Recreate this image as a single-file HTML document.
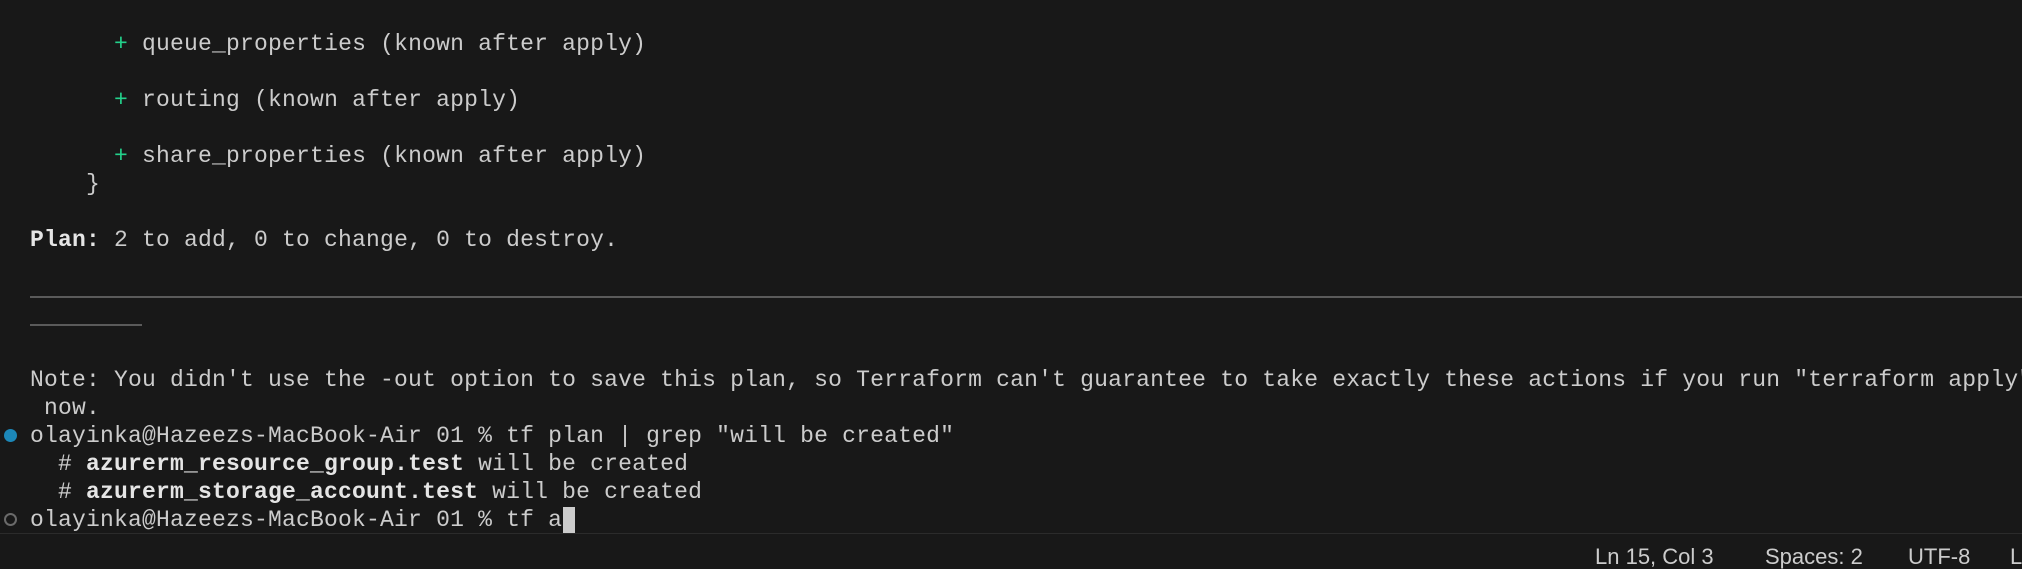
<!DOCTYPE html>
<html><head><meta charset="utf-8"><style>
html,body{margin:0;padding:0;background:#181818;width:2022px;height:558px;overflow:hidden;}
.t{position:absolute;left:0;top:0;width:2022px;height:533px;}
.r{position:absolute;left:30px;height:28px;line-height:28px;white-space:pre;font-family:"Liberation Mono",monospace;font-size:23px;letter-spacing:0.2px;color:#cccccc;}
.g{color:#23d18b}
b{font-weight:bold;color:#e5e5e5}
.sep{position:absolute;left:30px;height:2px;background:#5a5a5a;}
.dot{position:absolute;left:4px;width:13px;height:13px;border-radius:50%;box-sizing:border-box;}
.cur{position:absolute;left:563px;top:507px;width:12px;height:26px;background:#cccccc;}
.sb{position:absolute;left:0;top:533px;width:2022px;height:25px;border-top:1px solid #2b2b2b;background:#181818;}
.sbt{position:absolute;top:11px;font-family:"Liberation Sans",sans-serif;font-size:22px;color:#cccccc;white-space:pre;line-height:24px;}
</style></head><body>
<div class="t">
<div class="r" style="top:-26px">        <span class="g">+</span> static_website (known after apply)</div>
<div class="r" style="top:30px">      <span class="g">+</span> queue_properties (known after apply)</div>
<div class="r" style="top:86px">      <span class="g">+</span> routing (known after apply)</div>
<div class="r" style="top:142px">      <span class="g">+</span> share_properties (known after apply)</div>
<div class="r" style="top:170px">    }</div>
<div class="r" style="top:226px"><b>Plan:</b> 2 to add, 0 to change, 0 to destroy.</div>
<div class="sep" style="top:296px;width:1992px"></div>
<div class="sep" style="top:324px;width:112px"></div>
<div class="r" style="top:366px">Note: You didn't use the -out option to save this plan, so Terraform can't guarantee to take exactly these actions if you run "terraform apply"</div>
<div class="r" style="top:394px"> now.</div>
<div class="dot" style="top:429px;background:#1c87b8"></div>
<div class="r" style="top:422px">olayinka@Hazeezs-MacBook-Air 01 % tf plan | grep "will be created"</div>
<div class="r" style="top:450px">  # <b>azurerm_resource_group.test</b> will be created</div>
<div class="r" style="top:478px">  # <b>azurerm_storage_account.test</b> will be created</div>
<div class="dot" style="top:513px;border:2px solid #6a6a6a"></div>
<div class="r" style="top:506px">olayinka@Hazeezs-MacBook-Air 01 % tf a</div>
<div class="cur"></div>
</div>
<div class="sb">
<div class="sbt" style="left:1595px">Ln 15, Col 3</div>
<div class="sbt" style="left:1765px">Spaces: 2</div>
<div class="sbt" style="left:1908px">UTF-8</div>
<div class="sbt" style="left:2010px">LF</div>
</div>
</body></html>
